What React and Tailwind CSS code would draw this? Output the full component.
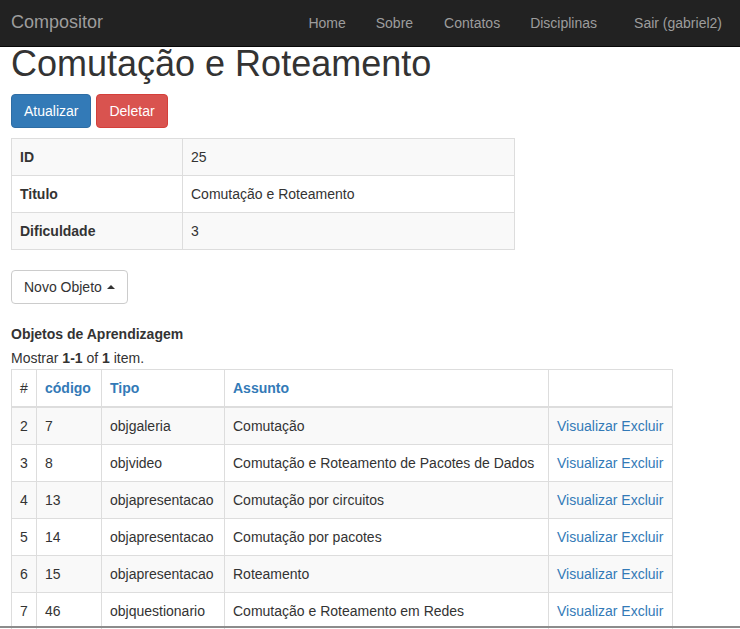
const rows = [
  ['2', '7', 'objgaleria', 'Comutação'],
  ['3', '8', 'objvideo', 'Comutação e Roteamento de Pacotes de Dados'],
  ['4', '13', 'objapresentacao', 'Comutação por circuitos'],
  ['5', '14', 'objapresentacao', 'Comutação por pacotes'],
  ['6', '15', 'objapresentacao', 'Roteamento'],
  ['7', '46', 'objquestionario', 'Comutação e Roteamento em Redes'],
]

const details = [
  ['ID', '25'],
  ['Titulo', 'Comutação e Roteamento'],
  ['Dificuldade', '3'],
]

function Navbar() {
  return (
    <nav className="h-[47px] bg-[#222] border-b border-[#080808] flex items-center pl-[11px]">
      <span className="text-[18px] leading-[18px] text-[#9d9d9d] pb-[2px]">Compositor</span>
      <ul className="ml-auto flex items-center pr-[3px] text-[#9d9d9d]">
        <li className="pl-[14px] pr-[15px]">Home</li>
        <li className="px-[15px]">Sobre</li>
        <li className="pl-[16px] pr-[15px]">Contatos</li>
        <li className="px-[15px]">Disciplinas</li>
        <li className="pl-[22px] pr-[15px]">Sair (gabriel2)</li>
      </ul>
    </nav>
  )
}

export default function App() {
  return (
    <div className="font-['Liberation_Sans',Arial,sans-serif] text-[14px] leading-[20px] text-[#333] bg-white min-h-[629px]">
      <Navbar />
      <div className="px-[11px]">
        <h1 className="text-[36px] leading-[34px] font-normal">Comutação e Roteamento</h1>

        <div className="mt-[13px] flex gap-[5px]">
          <button className="h-[34px] px-[12px] rounded-[4px] border border-[#2e6da4] bg-[#337ab7] text-white">Atualizar</button>
          <button className="h-[34px] px-[12px] rounded-[4px] border border-[#d43f3a] bg-[#d9534f] text-white">Deletar</button>
        </div>

        <table className="mt-[10px] w-[504px] border-collapse table-fixed">
          <tbody>
            {details.map(([k, v], i) => (
              <tr key={k} className={i % 2 === 0 ? 'bg-[#f9f9f9]' : 'bg-white'}>
                <th className="w-[171px] border border-[#ddd] p-[8px] text-left font-bold">{k}</th>
                <td className="border border-[#ddd] p-[8px]">{v}</td>
              </tr>
            ))}
          </tbody>
        </table>

        <button className="mt-[20px] h-[34px] px-[12px] rounded-[4px] border border-[#ccc] bg-white text-[#333] flex items-center">
          Novo Objeto
          <span className="ml-[5px] w-0 h-0 border-x-[4px] border-x-transparent border-b-[4px] border-b-[#333]" />
        </button>

        <div className="mt-[20px] font-bold">Objetos de Aprendizagem</div>
        <div className="mt-[4px]">
          Mostrar <b>1-1</b> of <b>1</b> item.
        </div>

        <table className="mt-[1px] w-[662px] border-collapse table-fixed">
          <thead>
            <tr>
              <th className="w-[25px] border border-[#ddd] border-b-2 p-[8px] text-left font-normal">#</th>
              <th className="w-[65px] border border-[#ddd] border-b-2 p-[8px] text-left font-bold text-[#337ab7]">código</th>
              <th className="w-[123px] border border-[#ddd] border-b-2 p-[8px] text-left font-bold text-[#337ab7]">Tipo</th>
              <th className="w-[324px] border border-[#ddd] border-b-2 p-[8px] text-left font-bold text-[#337ab7]">Assunto</th>
              <th className="border border-[#ddd] border-b-2 p-[8px]" />
            </tr>
          </thead>
          <tbody>
            {rows.map((r, i) => (
              <tr key={r[0]} className={i % 2 === 0 ? 'bg-[#f9f9f9]' : 'bg-white'}>
                <td className="border border-[#ddd] p-[8px] whitespace-nowrap">{r[0]}</td>
                <td className="border border-[#ddd] p-[8px] whitespace-nowrap">{r[1]}</td>
                <td className="border border-[#ddd] p-[8px] whitespace-nowrap">{r[2]}</td>
                <td className="border border-[#ddd] p-[8px] whitespace-nowrap">{r[3]}</td>
                <td className="border border-[#ddd] p-[8px] whitespace-nowrap text-[#337ab7]">Visualizar Excluir</td>
              </tr>
            ))}
          </tbody>
        </table>
      </div>
      <div className="fixed left-0 right-0 bottom-[1px] h-[2px] bg-[#8c8c8c]" />
    </div>
  )
}
